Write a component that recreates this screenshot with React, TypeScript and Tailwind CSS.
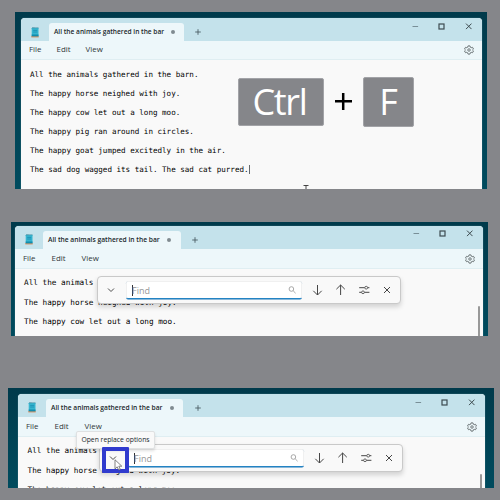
import React from "react";

const UI = "font-['Open_Sans','Noto_Sans',sans-serif]";
const MONO = "font-['DejaVu_Sans_Mono','Liberation_Mono',monospace]";

function NotepadIcon() {
  return (
    <svg className="block h-[11px] w-2" viewBox="0 0 8 11">
      <rect x="0.3" y="9" width="7.4" height="1.4" fill="#d88c5b" />
      <rect x="0.7" y="0.8" width="6.8" height="8.4" rx="0.4" fill="#36b5cf" />
      <path d="M1 .8h6.3" stroke="#477f91" strokeWidth="1" strokeDasharray=".7 .5" />
      <path d="M2.2 3.4h4M2.2 5h4" stroke="#1688ad" strokeWidth=".7" />
      <path d="M.7 7.5h6.8v1.7H.7z" fill="#128cad" />
    </svg>
  );
}

function GearIcon() {
  return (
    <svg className="block size-[10px]" viewBox="0 0 20 20" fill="none" stroke="#5d6568" strokeWidth="1.7" strokeLinejoin="round">
      <path d="M8 1.8h4l.7 2.7 1.6.9 2.7-.8 2 3.5-2 1.9 2 1.9-2 3.5-2.7-.8-1.6.9-.7 2.7H8l-.7-2.7-1.6-.9-2.7.8-2-3.5 2-1.9-2-1.9 2-3.5 2.7.8 1.6-.9z" />
      <circle cx="10" cy="10" r="2.5" />
    </svg>
  );
}

function WindowControls({ className }: { className: string }) {
  return (
    <svg className={`block h-[7px] w-[60px] ${className}`} viewBox="0 0 60 7" fill="none" stroke="#3d4b50">
      <path d="M0.5 3.5h5.6" stroke="#71868d" strokeWidth=".9" />
      <rect x="27" y="1" width="5" height="5" strokeWidth="1.2" />
      <path d="m54 .6 5.5 5.5m0-5.5L54 6.1" strokeWidth="1" />
    </svg>
  );
}

function PlusIcon() {
  return (
    <svg className="block size-[6px]" viewBox="0 0 6 6" stroke="#455960" strokeWidth=".85">
      <path d="M3 .2v5.6M.2 3h5.6" />
    </svg>
  );
}

type WindowProps = {
  frame: string;
  shell: string;
  title: string;
  icon: string;
  tab: string;
  tabText: string;
  plus: string;
  controls: string;
  menu: string;
  menuItems: string;
  editor: string;
  lines: string[];
  caret?: boolean;
  children?: React.ReactNode;
};

function Notepad(p: WindowProps) {
  return (
    <section className={`relative overflow-hidden bg-linear-to-b from-[#003a4b] to-[#004b5e] ${p.frame}`}>
      <div className={`flex h-full flex-col overflow-hidden rounded-t-[4px] bg-[#f9f9f9] shadow-[0_0_1px_#8eb6c2] ${p.shell}`}>
        <header className={`flex shrink-0 bg-[#c4e2eb] ${p.title}`}>
          <div className={`shrink-0 ${p.icon}`}><NotepadIcon /></div>
          <div className={`flex shrink-0 items-center justify-between self-end rounded-t-[3px] bg-[#edf7fa] ${p.tab}`}>
            <span className={`whitespace-nowrap font-semibold text-[#20272b] ${UI} ${p.tabText}`}>All the animals gathered in the bar</span>
            <i className="block size-[4px] rounded-full bg-[#808b90]" />
          </div>
          <div className={`shrink-0 ${p.plus}`}><PlusIcon /></div>
          <WindowControls className={`ml-auto shrink-0 ${p.controls}`} />
        </header>
        <nav className={`flex shrink-0 items-center border-b border-[#dfeef2] bg-[#edf7fa] text-[7.9px] leading-none text-[#30383b] ${UI} ${p.menu}`}>
          <div className={`flex ${p.menuItems}`}><span>File</span><span>Edit</span><span>View</span></div>
          <div className="ml-auto"><GearIcon /></div>
        </nav>
        <main className={`min-h-0 grow whitespace-pre text-black ${MONO} ${p.editor}`}>
          {p.lines.map((line, i) => (
            <div key={line} className="flex items-center">
              <span>{line}</span>
              {p.caret && i === p.lines.length - 1 && <i className="h-[9px] w-px bg-[#65696b]" />}
            </div>
          ))}
        </main>
      </div>
      {p.children}
    </section>
  );
}

function FindBar({ className }: { className: string }) {
  return (
    <div className={`absolute flex w-[304px] items-center rounded-[4px] border border-[#c9c9c9] bg-[#f9f9f9] shadow-[0_3px_5px_#00000028] ${className}`}>
      <svg className="ml-[9px] block size-[8px] shrink-0" viewBox="0 0 8 8" fill="none" stroke="#4d4d4d" strokeWidth="1"><path d="m1 2.5 3 3 3-3" /></svg>
      <div className="ml-[11px] flex h-[18px] w-[176px] shrink-0 items-center rounded-[2px] border border-[#f0f0f0] border-b-[#2383c3] bg-white pl-[5px] pr-[5px] shadow-[0_.5px_0_#1876ba]">
        <i className="h-[11px] w-px shrink-0 bg-[#333]" />
        <span className={`-ml-px text-[9px] leading-none text-[#969696] ${UI}`}>Find</span>
        <svg className="ml-auto block size-[8px]" viewBox="0 0 8 8" fill="none" stroke="#939393" strokeWidth=".8"><circle cx="3.4" cy="3" r="2.3" /><path d="m5.2 4.8 2.4 2.4" /></svg>
      </div>
      <svg className="ml-[10px] block h-3 w-20 shrink-0" viewBox="0 0 80 12" fill="none" stroke="#464646" strokeWidth="1">
        <path d="M5.5 1v10M1.3 6.8 5.5 11l4.2-4.2M28.6 11V1m-4.2 4.2L28.6 1l4.2 4.2" />
        <path d="M47.2 3.7h5.5m3 0h1.7M47.2 8.3h2.3m3 0h4.9" />
        <circle cx="54.2" cy="3.7" r="1.4" strokeWidth=".8" /><circle cx="51" cy="8.3" r="1.4" strokeWidth=".8" />
        <path d="m72 3 6 6m0-6-6 6" />
      </svg>
    </div>
  );
}

export default function App() {
  return (
    <div className="flex h-[500px] w-[500px] flex-col overflow-hidden bg-[#85868a]">
      <Notepad
        frame="mt-3 ml-[15px] h-[177px] w-[472px] shrink-0 pt-[6px] pl-[6px]"
        shell="w-[461px]"
        title="h-[23px]"
        icon="pt-[9px] pl-[10px]"
        tab="ml-[10px] h-[18px] w-[135px] pr-[9px] pl-[5px]"
        tabText="w-[109px] pt-px text-[6.6px] leading-none"
        plus="pt-[11px] pl-[11px]"
        controls="mt-[5px] mr-[10px]"
        menu="h-[19px] pl-2 pr-2"
        menuItems="gap-[15px]"
        editor="pt-[5px] pl-[9px] text-[7.57px] leading-[19px]"
        lines={["All the animals gathered in the barn.", "The happy horse neighed with joy.", "The happy cow let out a long moo.", "The happy pig ran around in circles.", "The happy goat jumped excitedly in the air.", "The sad dog wagged its tail. The sad cat purred."]}
        caret
      >
        <div className={`absolute top-[65px] left-[223px] flex items-center text-white ${UI}`}>
          <kbd className={`flex h-[48px] w-[86px] items-center justify-center rounded-[2px] border border-[#a2a3a7] bg-[#85868a] pr-[3px] pb-px text-[36px] leading-none tracking-[-1.3px] ${UI}`}>Ctrl</kbd>
          <svg className="mx-[11px] mb-[2px] block size-[17px]" viewBox="0 0 17 17" stroke="#000" strokeWidth="2.5"><path d="M8.2 0v17M0 8.2h17" /></svg>
          <kbd className={`flex h-[50px] w-[51px] items-center justify-center rounded-[2px] border border-[#a2a3a7] bg-[#85868a] text-[36px] leading-none ${UI}`}>F</kbd>
        </div>
        <svg className="absolute top-[173px] left-[288px] block h-[4px] w-[6px]" viewBox="0 0 6 4" fill="none" stroke="#333" strokeWidth=".9"><path d="M.5.5h5M3 .5V4" /></svg>
      </Notepad>

      <Notepad
        frame="mt-[33px] ml-[11px] h-[114px] w-[477px] shrink-0 pt-[4px] pl-[4px]"
        shell="w-[468px]"
        title="h-[23px]"
        icon="pt-[8px] pl-[10px]"
        tab="ml-[10px] h-[18px] w-[138px] pr-[10px] pl-[5px]"
        tabText="w-[112px] pt-px text-[6.7px] leading-none"
        plus="pt-[11px] pl-[11px]"
        controls="mt-[4px] mr-[10px]"
        menu="h-5 pl-2 pr-2"
        menuItems="gap-[16px]"
        editor="pt-1 pl-[9px] text-[7.7px] leading-[19.5px]"
        lines={["All the animals gathered in the barn.", "The happy horse neighed with joy.", "The happy cow let out a long moo."]}
      >
        <FindBar className="top-[54px] left-[86px] h-[28px]" />
        <i className="absolute top-[84px] left-[467px] h-[30px] w-[2px] rounded-t bg-[#999]" />
      </Notepad>

      <Notepad
        frame="mt-[52px] ml-2 h-[100px] w-[486px] shrink-0 pt-[6px] pl-[10px]"
        shell="w-[467px]"
        title="h-[23px]"
        icon="pt-[8px] pl-[10px]"
        tab="ml-[10px] h-[18px] w-[137px] pr-[9px] pl-[5px]"
        tabText="w-[112px] pt-px text-[6.68px] leading-none"
        plus="pt-[11px] pl-[12px]"
        controls="mt-[5px] mr-[10px]"
        menu="h-5 pl-2 pr-2"
        menuItems="gap-[16px]"
        editor="pt-1 pl-[9.5px] text-[7.7px] leading-[19.5px]"
        lines={["All the animals gathered in the barn.", "The happy horse neighed with joy.", "The happy cow let out a long moo."]}
      >
        <FindBar className="top-[56px] left-[91px] h-[28px]" />
        <i className="absolute top-[86px] left-[472px] h-[14px] w-[2px] rounded-t bg-[#999]" />
        <div className={`absolute top-[43px] left-[68px] flex h-[18px] w-[79px] items-center justify-center rounded-[2px] border border-[#dfe1e2] bg-[#f9f9f9] text-[6.8px] leading-none whitespace-nowrap text-[#20282b] shadow-[0_2px_3px_#00000020] ${UI}`}>Open replace options</div>
        <div className="absolute top-[59px] left-[94px] h-[26px] w-[27px] rounded-[1px] border-4 border-[#303bce]" />
        <svg className="absolute top-[71px] left-[106px] block h-[12px] w-[9px]" viewBox="0 0 9 12" fill="#fff" stroke="#666" strokeWidth=".8"><path d="M1 .8v9.1l2.2-2.1 1.5 3.3 1.6-.7-1.5-3.2h3z" /></svg>
      </Notepad>
    </div>
  );
}
